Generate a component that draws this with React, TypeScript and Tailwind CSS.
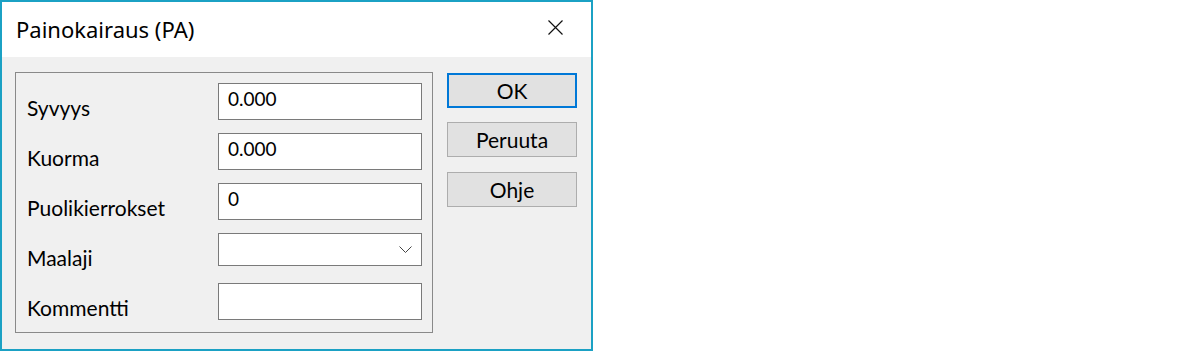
const rows = [
  { label: 'Syvyys', value: '0.000' },
  { label: 'Kuorma', value: '0.000' },
  { label: 'Puolikierrokset', value: '0' },
  { label: 'Maalaji', combo: true },
  { label: 'Kommentti', value: '' },
]

export default function App() {
  return (
    <div className="h-[351px] w-[1200px] bg-white font-['Lato',sans-serif] text-[21px] text-black">
      <div className="flex h-[351px] w-[593px] flex-col border-2 border-[#1ba1c4] bg-[#f0f0f0]">
        {/* title bar */}
        <div className="flex h-[55px] items-center justify-between bg-white pl-[14px] pr-[28px]">
          <span className="font-['Noto_Sans',sans-serif] text-[22px]">Painokairaus (PA)</span>
          <svg width="15" height="15" viewBox="0 0 15 15" className="-mt-[4px]">
            <path d="M0.5 0.5L14.5 14.5M14.5 0.5L0.5 14.5" stroke="#111" strokeWidth="1.2" />
          </svg>
        </div>

        <div className="flex pl-[13px] pt-[15px]">
          {/* group box */}
          <div className="grid h-[261px] w-[418px] grid-cols-[191px_204px] grid-rows-[50px_50px_50px_50px_37px] border border-[#898989] pb-[12px] pl-[11px] pr-[10px] pt-[10px]">
            {rows.map((r) => (
              <div key={r.label} className="contents">
                <div className="pt-[14px] leading-[22px]">{r.label}</div>
                {r.combo ? (
                  <div className="flex h-[33px] items-center justify-end border border-[#7a7a7a] bg-white pr-[9px]">
                    <svg width="13" height="7" viewBox="0 0 13 7">
                      <path d="M0.5 0.5L6.5 6.5L12.5 0.5" fill="none" stroke="#444" strokeWidth="1" />
                    </svg>
                  </div>
                ) : (
                  <div className="h-[37px] border border-[#7a7a7a] bg-white pl-[9px] pt-[2px] text-[19px] leading-[26px]">
                    {r.value}
                  </div>
                )}
              </div>
            ))}
          </div>

          {/* buttons */}
          <div className="ml-[14px] flex w-[130px] flex-col">
            <button className="mt-[1px] h-[35px] border-2 border-[#0078d7] bg-[#e1e1e1] leading-none">OK</button>
            <button className="mt-[14px] h-[35px] border border-[#adadad] bg-[#e1e1e1] leading-none">Peruuta</button>
            <button className="mt-[15px] h-[35px] border border-[#adadad] bg-[#e1e1e1] leading-none">Ohje</button>
          </div>
        </div>
      </div>
    </div>
  )
}
